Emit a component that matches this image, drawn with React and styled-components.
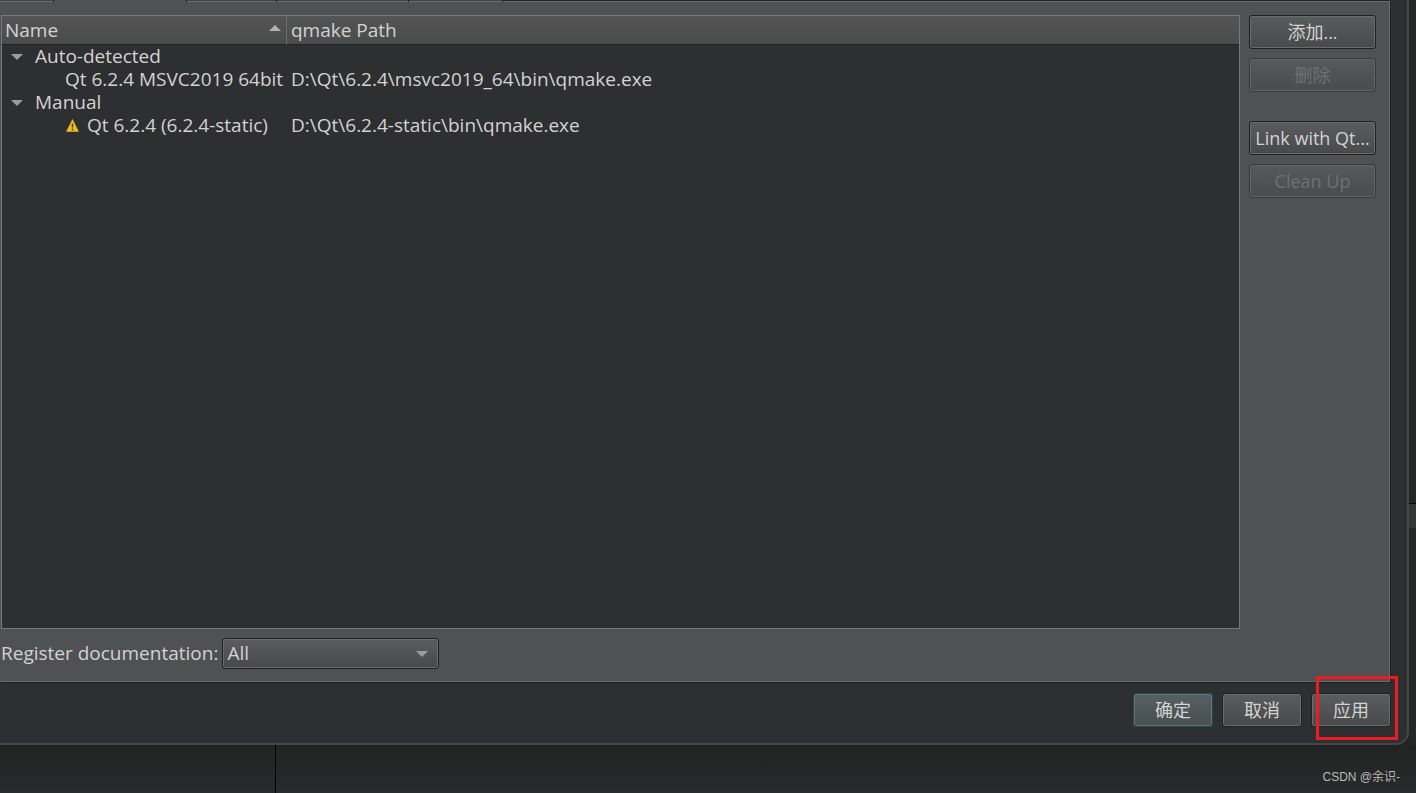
import React from "react";
import styled, { createGlobalStyle, css } from "styled-components";

const GlobalStyle = createGlobalStyle`
  * { box-sizing: border-box; }
  body {
    margin: 0;
    background: #242525;
    color: #d2d3d3;
    font: 19px/23px "Open Sans", "Noto Sans CJK SC", sans-serif;
  }
  button, select { font: inherit; color: inherit; }
`;

const Desktop = styled.div`
  min-height: 100vh;
  display: grid;
  grid-template-columns: minmax(0, 1fr) 7px;
  grid-template-rows: minmax(0, 1fr) 48px;
  background: linear-gradient(to bottom, #222323 94%, #292a2b 100%);
`;

const Dialog = styled.main`
  display: flex;
  flex-direction: column;
  padding-right: 17px;
  background: #2e2f31;
  border: solid #454646;
  border-width: 0 2px 2px 0;
  border-bottom-right-radius: 13px;
`;

const EdgeStrip = styled.div`
  display: flex;
  flex-direction: column;
  background: #262727;
`;

const EdgeSpace = styled.div`
  flex: ${(p) => p.$grow};
`;

const EdgeHandle = styled.div`
  height: 25px;
  background: #363838;
  border-top: 1px solid #050505;
`;

const Footer = styled.footer`
  grid-column: 1 / -1;
  display: flex;
`;

const FooterSide = styled.div`
  width: 276px;
  border-right: 1px solid #050505;
`;

const Watermark = styled.div`
  flex: 1;
  padding: 22px 16px 0 0;
  text-align: right;
  font: 12px/20px "Liberation Sans", "Noto Sans CJK SC", sans-serif;
  color: #b9baba;
`;

const TabStrip = styled.div`
  display: flex;
  height: 2px;
  margin-bottom: -1px;
  position: relative;
  background: linear-gradient(#222325 1px, #6b6c6d 1px);
`;

const Tab = styled.div`
  width: ${(p) => p.$width}px;
  background: ${(p) => (p.$active ? "#505153" : "linear-gradient(#414244 1px, #6b6c6d 1px)")};
  border-right: 1px solid #222325;
`;

const Panel = styled.section`
  flex: 1;
  display: flex;
  flex-direction: column;
  padding: 13px 13px 12px 1px;
  background: #505153;
  border: solid #6b6c6d;
  border-width: 1px 1px 1px 0;
  box-shadow: 1px 1px 0 #202122;
`;

const Columns = styled.div`
  flex: 1;
  display: flex;
  gap: 9px;
`;

const TreeFrame = styled.div`
  flex: 1;
  background: #2e2f31;
  border: 1px solid #77787a;
`;

const Tree = styled.table`
  width: 100%;
  table-layout: fixed;
  border-collapse: separate;
  border-spacing: 0;
`;

const HeadCell = styled.th`
  width: ${(p) => p.$width || "auto"};
  height: 29px;
  padding: 0 5px 0 3px;
  text-align: left;
  font-weight: 400;
  background: linear-gradient(#545454, #4a4b4b);
  border-bottom: 1px solid #1f2021;
  ${(p) => p.$divided && css`border-right: 1px solid #6b6c6d;`}
  & + & { padding-left: 4px; }
`;

const HeadContent = styled.div`
  display: flex;
  justify-content: space-between;
  align-items: center;
  & > svg { margin-bottom: 4px; }
`;

const Cell = styled.td`
  height: 23px;
  padding: 0 0 0 ${(p) => p.$indent || 4}px;
  white-space: nowrap;
`;

const CellContent = styled.div`
  display: flex;
  align-items: center;
  gap: ${(p) => p.$gap || 0}px;
`;

const ButtonColumn = styled.div`
  width: 127px;
  display: flex;
  flex-direction: column;
  gap: 9px;
`;

const ButtonGroup = styled.div`
  display: flex;
  flex-direction: column;
  gap: 9px;
  margin-bottom: 20px;
`;

const Button = styled.button`
  width: ${(p) => p.$width || "100%"};
  height: 34px;
  padding: 0;
  font-size: 18px;
  white-space: nowrap;
  border: 1px solid #202122;
  border-radius: 3px;
  background: linear-gradient(#5b5c5e, #484949);
  box-shadow: inset 0 0 0 1px #6a6b6c;
  &:disabled {
    color: #6f7071;
    border-color: #38393a;
    background: linear-gradient(#58595b, #4a4b4b);
    box-shadow: inset 0 0 0 1px #626364;
  }
  ${(p) => p.$primary && css`
    border-color: #1f4a50;
    background: linear-gradient(#566063, #484e4f);
    box-shadow: inset 0 0 0 1px #617376;
  `}
`;

const Field = styled.div`
  display: flex;
  align-items: center;
  gap: 4px;
  margin-top: 9px;
`;

const SelectBox = styled.div`
  display: grid;
  align-items: center;
  width: 217px;
  & > * { grid-area: 1 / 1; }
  & > svg { justify-self: end; margin-right: 11px; pointer-events: none; }
`;

const Select = styled.select`
  appearance: none;
  width: 100%;
  height: 31px;
  padding: 0 4px;
  border: 1px solid #202122;
  border-radius: 3px;
  background: linear-gradient(#5b5c5e, #484949);
  box-shadow: inset 0 0 0 1px #6a6b6c;
`;

const Actions = styled.div`
  display: flex;
  justify-content: flex-end;
  gap: 9px;
  padding: 11px 0 16px;
  margin-right: -1px;
`;

const Highlighted = styled.div`
  position: relative;
  &::after {
    content: "";
    position: absolute;
    inset: -17px -7px -13px 5px;
    border: 3px solid #ed1c24;
    pointer-events: none;
  }
`;

const Arrow = ({ up, color = "#9b9c9c" }) => (
  <svg width="12" height="6" viewBox="0 0 12 6" aria-hidden="true">
    <path d={up ? "M0 6 6 0l6 6z" : "M0 0h12L6 6z"} fill={color} />
  </svg>
);

const Warning = () => (
  <svg width="14" height="14" viewBox="0 0 14 14" aria-hidden="true">
    <path d="M7.5 0.5 13.5 12.5H1.5z" fill="#f0be1e" stroke="#f0be1e" strokeWidth="0.5" strokeLinejoin="round" />
    <path d="M7.5 4.5v4M7.5 9.5v2" stroke="#4a3f22" strokeWidth="1.5" />
  </svg>
);

const tabs = [
  { width: 54 },
  { width: 133, active: true },
  { width: 90 },
  { width: 132 },
  { width: 94 },
];

const groups = [
  {
    name: "Auto-detected",
    items: [{ name: "Qt 6.2.4 MSVC2019 64bit", path: "D:\\Qt\\6.2.4\\msvc2019_64\\bin\\qmake.exe" }],
  },
  {
    name: "Manual",
    items: [{ name: "Qt 6.2.4 (6.2.4-static)", path: "D:\\Qt\\6.2.4-static\\bin\\qmake.exe", warn: true }],
  },
];

export default function App() {
  return (
    <>
      <GlobalStyle />
      <Desktop>
        <Dialog>
          <TabStrip>
            {tabs.map((t, i) => (
              <Tab key={i} $width={t.width} $active={t.active} />
            ))}
          </TabStrip>
          <Panel>
            <Columns>
              <TreeFrame>
                <Tree>
                  <thead>
                    <tr>
                      <HeadCell $width="285px" $divided>
                        <HeadContent>
                          Name
                          <Arrow up color="#b0b1b1" />
                        </HeadContent>
                      </HeadCell>
                      <HeadCell>qmake Path</HeadCell>
                    </tr>
                  </thead>
                  {groups.map((g) => (
                    <tbody key={g.name}>
                      <tr>
                        <Cell colSpan={2} $indent={9}>
                          <CellContent $gap={12}>
                            <Arrow />
                            {g.name}
                          </CellContent>
                        </Cell>
                      </tr>
                      {g.items.map((item) => (
                        <tr key={item.path}>
                          <Cell $indent={63}>
                            <CellContent $gap={8}>
                              {item.warn && <Warning />}
                              {item.name}
                            </CellContent>
                          </Cell>
                          <Cell>{item.path}</Cell>
                        </tr>
                      ))}
                    </tbody>
                  ))}
                </Tree>
              </TreeFrame>
              <ButtonColumn>
                <ButtonGroup>
                  <Button>添加...</Button>
                  <Button disabled>删除</Button>
                </ButtonGroup>
                <Button>Link with Qt...</Button>
                <Button disabled>Clean Up</Button>
              </ButtonColumn>
            </Columns>
            <Field>
              <label htmlFor="register-docs">Register documentation:</label>
              <SelectBox>
                <Select id="register-docs" defaultValue="All">
                  <option>All</option>
                </Select>
                <Arrow />
              </SelectBox>
            </Field>
          </Panel>
          <Actions>
            <Button $width="80px" $primary>确定</Button>
            <Button $width="80px">取消</Button>
            <Highlighted>
              <Button $width="80px">应用</Button>
            </Highlighted>
          </Actions>
        </Dialog>
        <EdgeStrip>
          <EdgeSpace $grow={503} />
          <EdgeHandle />
          <EdgeSpace $grow={217} />
        </EdgeStrip>
        <Footer>
          <FooterSide />
          <Watermark>CSDN @余识-</Watermark>
        </Footer>
      </Desktop>
    </>
  );
}
